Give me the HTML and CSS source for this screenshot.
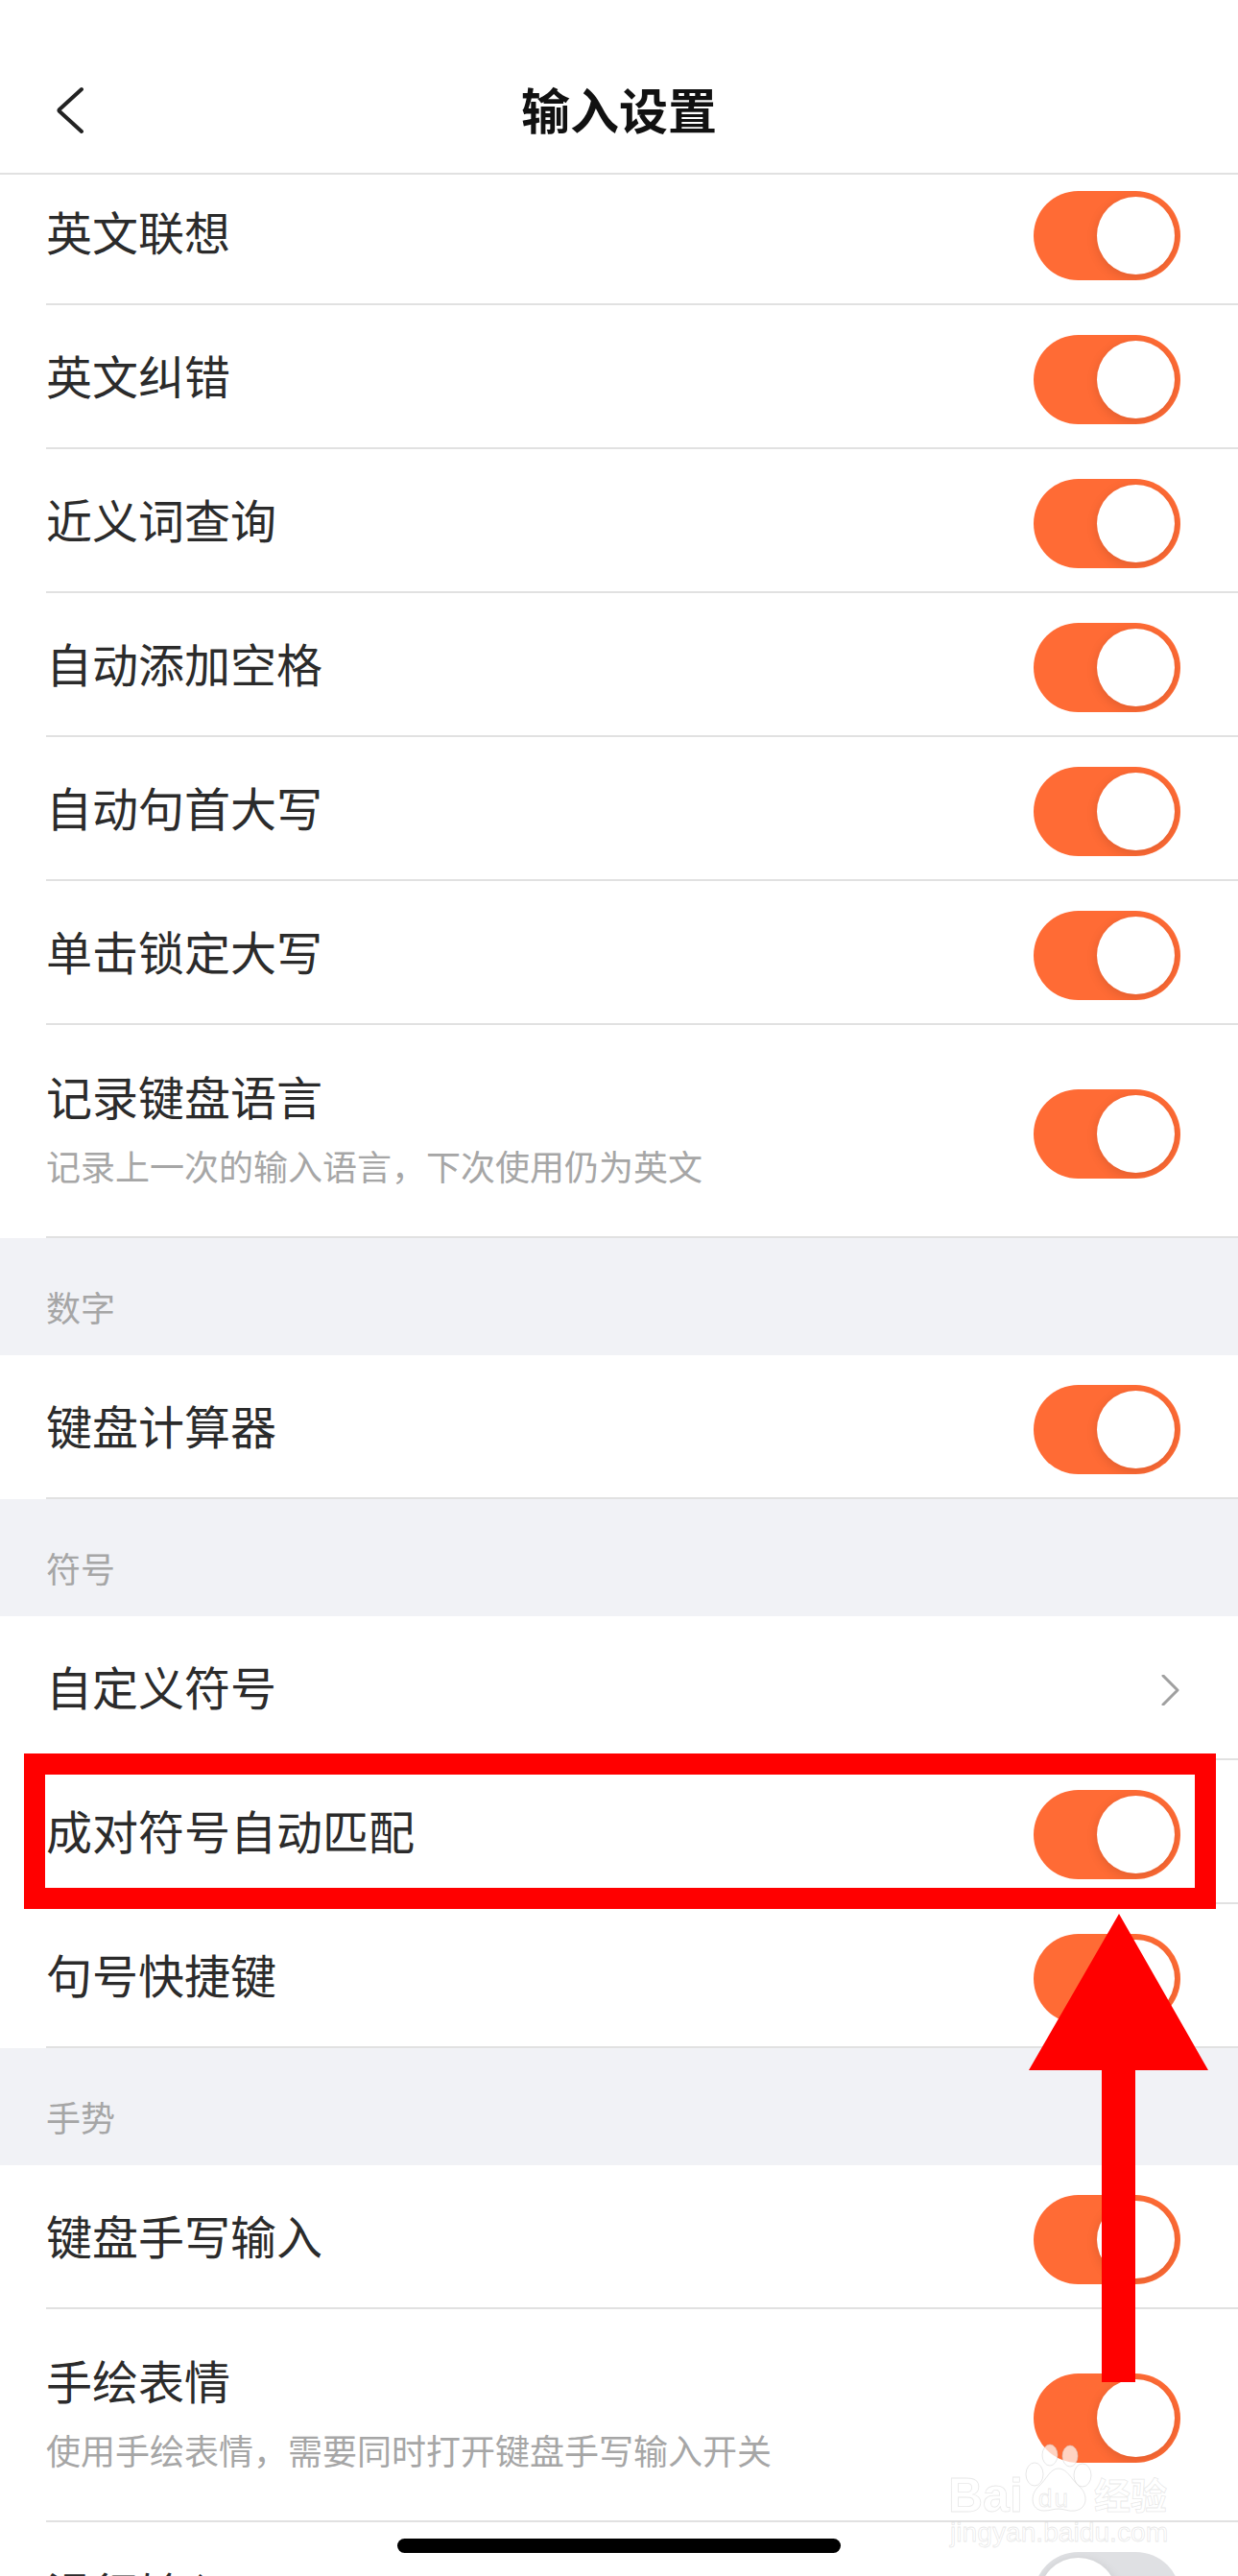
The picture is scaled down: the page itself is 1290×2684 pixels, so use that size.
FILE: index.html
```html
<!DOCTYPE html>
<html lang="zh-CN">
<head>
<meta charset="utf-8">
<title>输入设置</title>
<link rel="stylesheet" href="styles.css">
</head>
<body>
<div class="screen">
  <header class="nav">
    <svg class="nav-back" width="30" height="50" viewBox="0 0 30 50"><path d="M28 3 L5 24 Q4 25 5 26 L28 47"/></svg>
    <h1 class="nav-title">输入设置</h1>
  </header>
  <main class="viewport">
    <div class="list">
      <div class="row"><span class="label">英文联想</span><span class="toggle on"><i class="knob"></i></span></div>
      <div class="row"><span class="label">英文纠错</span><span class="toggle on"><i class="knob"></i></span></div>
      <div class="row"><span class="label">近义词查询</span><span class="toggle on"><i class="knob"></i></span></div>
      <div class="row"><span class="label">自动添加空格</span><span class="toggle on"><i class="knob"></i></span></div>
      <div class="row"><span class="label">自动句首大写</span><span class="toggle on"><i class="knob"></i></span></div>
      <div class="row"><span class="label">单击锁定大写</span><span class="toggle on"><i class="knob"></i></span></div>
      <div class="row double"><div class="text"><span class="label">记录键盘语言</span><span class="sub">记录上一次的输入语言，下次使用仍为英文</span></div><span class="toggle on"><i class="knob"></i></span></div>
      <div class="section">数字</div>
      <div class="row"><span class="label">键盘计算器</span><span class="toggle on"><i class="knob"></i></span></div>
      <div class="section">符号</div>
      <div class="row"><span class="label">自定义符号</span><svg class="chev" width="20" height="32" viewBox="0 0 20 32"><path d="M2 1 L17 16 L2 31"/></svg></div>
      <div class="row"><span class="label">成对符号自动匹配</span><span class="toggle on"><i class="knob"></i></span></div>
      <div class="row"><span class="label">句号快捷键</span><span class="toggle on"><i class="knob"></i></span></div>
      <div class="section">手势</div>
      <div class="row"><span class="label">键盘手写输入</span><span class="toggle on"><i class="knob"></i></span></div>
      <div class="row double"><div class="text"><span class="label">手绘表情</span><span class="sub">使用手绘表情，需要同时打开键盘手写输入开关</span></div><span class="toggle on"><i class="knob"></i></span></div>
      <div class="row"><span class="label">滑行输入</span><span class="toggle off"><i class="knob"></i></span></div>
    </div>
  </main>

  <svg class="annotation" width="1290" height="2684" viewBox="0 0 1290 2684">
    <rect x="36" y="1838" width="1220" height="140" fill="none" stroke="#ff0000" stroke-width="22"/>
    <polygon fill="#ff0000" points="1166,1994 1259,2157 1183,2157 1183,2482 1148,2482 1148,2157 1072,2157"/>
  </svg>

  <div class="homebar"></div>

  <div class="watermark">
    <svg class="paw" width="70" height="76" viewBox="0 0 70 76">
      <ellipse cx="24" cy="12" rx="8" ry="11"/>
      <ellipse cx="45" cy="13" rx="8" ry="11"/>
      <ellipse cx="8" cy="32" rx="9" ry="12"/>
      <ellipse cx="58" cy="33" rx="9" ry="12"/>
      <path d="M33 26 C24 26 20 38 13 44 C3 52 3 70 18 70 C24 70 28 68 33 68 C38 68 44 71 50 70 C64 68 64 52 54 44 C47 38 42 26 33 26 Z"/>
    </svg>
    <span class="wm-bai">Bai</span>
    <span class="wm-du">du</span>
    <span class="wm-jy">经验</span>
    <span class="wm-url">jingyan.baidu.com</span>
  </div>
</div>
</body>
</html>
```
FILE: styles.css
```css
* { box-sizing: border-box; }
html, body { margin: 0; padding: 0; background: #fff; }
body { font-family: "Noto Sans CJK SC", "Noto Sans", sans-serif; color: #2b2b2b; }
.screen { position: relative; width: 1290px; height: 2684px; overflow: hidden; background: #fff; display: flex; flex-direction: column; }

.nav { height: 182px; flex: none; border-bottom: 2px solid #e1e1e1; display: flex; align-items: center; justify-content: center; position: relative; padding-top: 50px; background: #fff; z-index: 1; }
.nav-title { margin: 0; font-size: 51px; font-weight: 700; color: #111; line-height: 1; position: relative; top: -2px; left: 0; }
.nav-back { position: absolute; left: 57px; top: 90px; }
.nav-back path { fill: none; stroke: #222; stroke-width: 4; stroke-linecap: round; stroke-linejoin: round; }

.viewport { flex: 1; overflow: hidden; }
.list { margin-top: -14px; }

.row { height: 150px; padding: 0 60px 0 48px; display: flex; align-items: center; justify-content: space-between; position: relative; background: #fff; }
.row::after { content: ""; position: absolute; left: 48px; right: 0; bottom: 0; height: 2px; background: #e1e1e1; }
.row.double { height: 222px; }
.label { font-size: 48px; line-height: 1; display: block; position: relative; top: -3px; }
.text { display: flex; flex-direction: column; gap: 28px; margin-bottom: 6px; }
.sub { font-size: 36px; line-height: 1; color: #a6a6a6; display: block; }

.toggle { width: 153px; height: 93px; border-radius: 47px; padding: 6px; display: flex; flex: none; margin-top: 5px; overflow: hidden; }
.toggle.on { background: #ff6b35; justify-content: flex-end; }
.toggle.off { background: #dfe0e3; justify-content: flex-start; }
.knob { display: block; width: 81px; height: 81px; border-radius: 50%; background: #fff; box-shadow: 0 3px 12px rgba(0, 0, 0, .13); }

.chev { margin-right: 0; margin-top: 4px; }
.chev path { fill: none; stroke: #a0a0a0; stroke-width: 3; stroke-linecap: round; stroke-linejoin: round; }

.section { height: 122px; background: #f1f2f6; padding: 53px 0 0 48px; font-size: 36px; line-height: 1; color: #a6a6a6; }

.annotation { position: absolute; left: 0; top: 0; pointer-events: none; }
.homebar { position: absolute; left: 414px; top: 2645px; width: 462px; height: 15px; border-radius: 8px; background: #000; }

.watermark { position: absolute; left: 985px; top: 2540px; width: 240px; height: 120px; font-family: "Liberation Sans", sans-serif; color: rgba(255, 255, 255, .8); -webkit-text-stroke: .8px rgba(205, 205, 205, .45); }
.watermark span { position: absolute; line-height: 1; white-space: nowrap; }
.paw { position: absolute; left: 85px; top: 6px; overflow: visible; }
.paw ellipse, .paw path { fill: rgba(255, 255, 255, .7); stroke: rgba(205, 205, 205, .5); stroke-width: 1; }
.wm-bai { left: 3px; top: 35px; font-size: 50px; font-weight: 700; }
.wm-du { left: 97px; top: 50px; font-size: 26px; font-weight: 400; letter-spacing: 2px; }
.wm-jy { left: 155px; top: 39px; font-size: 38px; font-weight: 700; font-family: "Noto Sans CJK SC", sans-serif; }
.wm-url { left: 5px; top: 84px; font-size: 28.2px; font-weight: 400; }
```
